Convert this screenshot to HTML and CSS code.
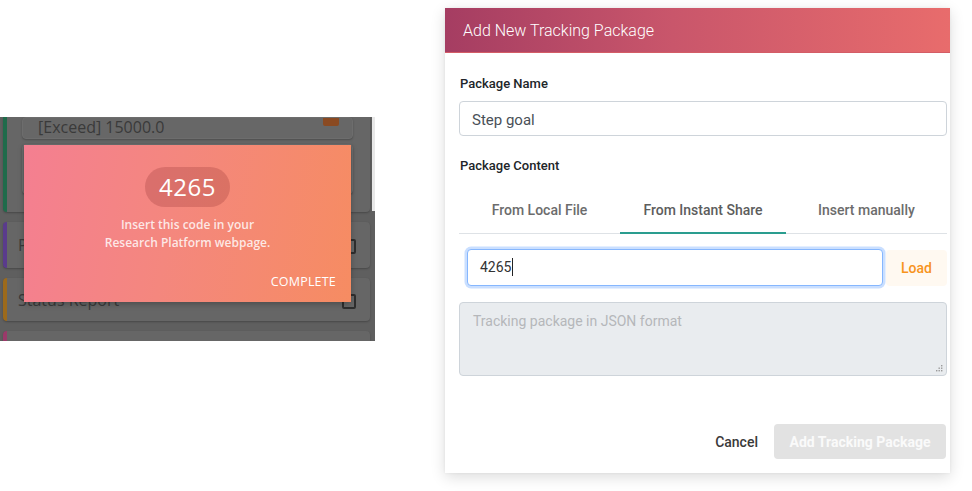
FILE: index.html
```html
<!DOCTYPE html>
<html>
<head>
<meta charset="utf-8">
<link rel="stylesheet" href="styles.css">
</head>
<body>
<div class="page">
  <section class="phone">
    <div class="rows">
      <div class="row row-green">
        <div class="inner inner-top">
          <span class="inner-text">[Exceed] 15000.0</span>
          <span class="check-filled"></span>
        </div>
        <div class="inner inner-second"></div>
      </div>
      <div class="row row-purple">
        <span class="row-text">Pulse</span>
        <span class="check"></span>
      </div>
      <div class="row row-orange">
        <span class="row-text">Status Report</span>
        <span class="check"></span>
      </div>
      <div class="row row-pink"></div>
    </div>
    <div class="scrollbar"></div>
    <div class="popup">
      <div class="code">4265</div>
      <p class="popup-msg">Insert this code in your<br>Research Platform webpage.</p>
      <div class="popup-actions"><span class="complete">COMPLETE</span></div>
    </div>
  </section>

  <section class="modal">
    <header class="modal-header">Add New Tracking Package</header>
    <div class="modal-body">
      <label class="field-label">Package Name</label>
      <div class="text-input">Step goal</div>
      <label class="field-label label-content">Package Content</label>
      <nav class="tabs">
        <span class="tab">From Local File</span>
        <span class="tab active">From Instant Share</span>
        <span class="tab">Insert manually</span>
      </nav>
      <div class="share-row">
        <div class="text-input focused">4265<span class="caret"></span></div>
        <span class="load-btn">Load</span>
      </div>
      <div class="json-area">
        <span class="placeholder">Tracking package in JSON format</span>
        <svg class="grip" width="7" height="7" viewBox="0 0 7 7"><g fill="#9a9a9a"><rect x="5" y="0" width="1.4" height="1.4"/><rect x="2.5" y="2.5" width="1.4" height="1.4"/><rect x="5" y="2.5" width="1.4" height="1.4"/><rect x="0" y="5" width="1.4" height="1.4"/><rect x="2.5" y="5" width="1.4" height="1.4"/><rect x="5" y="5" width="1.4" height="1.4"/></g></svg>
      </div>
      <div class="modal-footer">
        <span class="cancel-btn">Cancel</span>
        <span class="add-btn">Add Tracking Package</span>
      </div>
    </div>
  </section>
</div>
</body>
</html>
```

FILE: styles.css
```css
* { box-sizing: border-box; }
html, body { margin: 0; padding: 0; background: #ffffff; }
body { width: 972px; height: 491px; overflow: hidden; font-family: Roboto, "Liberation Sans", sans-serif; }

.page { display: flex; align-items: flex-start; }

/* ---------- left phone capture ---------- */
.phone {
  position: relative;
  margin-top: 117px;
  width: 375px;
  height: 224px;
  background: #5f5f5f;
  overflow: hidden;
  font-family: "Open Sans", "Noto Sans", sans-serif;
}
.rows { display: flex; flex-direction: column; gap: 10px; padding: 0 3px 0 3px; }
.row {
  position: relative;
  background: #666666;
  border-radius: 4px;
  border-left: 4px solid #333;
  display: flex;
  align-items: center;
  padding-left: 11px;
  margin-right: 2px;
  box-shadow: 0 1px 2px rgba(0,0,0,0.25);
}
.row-green { border-left-color: #1f6b4b; height: 95px; border-top-left-radius: 0; border-top-right-radius: 0; flex-direction: column; align-items: stretch; padding: 0 17px 0 15px; gap: 5px; }
.row-purple { border-left-color: #5a3b8c; height: 46px; }
.row-orange { border-left-color: #9c6a1c; height: 43px; }
.row-pink { border-left-color: #9a3a6a; height: 30px; }

.inner { background: #676767; border-radius: 4px; box-shadow: 0 1px 2px rgba(0,0,0,0.25); border: 1px solid #6d6d6d; }
.inner-top { height: 22px; display: flex; align-items: flex-end; justify-content: space-between; padding: 0 12px 1px 15px; position: relative; }
.inner-text { font-size: 16px; color: #3a3a3a; line-height: 19px; }
.check-filled { position: absolute; right: 13px; top: 0; width: 16px; height: 8px; background: #8a4a22; border-radius: 0 0 2px 2px; }
.inner-second { height: 50px; }
.row-text { font-size: 16px; color: #3a3a3a; }
.check { position: absolute; right: 14px; top: 50%; width: 14px; height: 15px; margin-top: -6px; border: 2px solid #2e2e2e; border-radius: 2px; }
.scrollbar { position: absolute; right: 0; top: 0; width: 3px; height: 94px; background: #e8e8e8; }

.popup {
  position: absolute;
  left: 24px;
  top: 28px;
  width: 327px;
  height: 157px;
  background: linear-gradient(100deg, #f47f91 0%, #f4877e 45%, #f68c62 100%);
  display: flex;
  flex-direction: column;
  align-items: center;
  padding-top: 22px;
  box-shadow: 0 2px 6px rgba(0,0,0,0.25);
}
.code {
  width: 85px;
  height: 40px;
  border-radius: 20px;
  background: rgba(150, 55, 55, 0.28);
  color: #ffffff;
  font-size: 24px;
  line-height: 40px;
  text-align: center;
  letter-spacing: 0.5px;
}
.popup-msg {
  margin: 9px 0 0;
  color: rgba(255,255,255,0.82);
  font-size: 12px;
  font-weight: 600;
  line-height: 18px;
  text-align: center;
}
.popup-actions { align-self: stretch; display: flex; justify-content: flex-end; padding-right: 15px; margin-top: 21px; }
.complete { color: #ffffff; font-size: 12.5px; letter-spacing: 0.2px; }

/* ---------- modal ---------- */
.modal {
  margin-left: 70px;
  margin-top: 8px;
  width: 505px;
  height: 465px;
  background: #ffffff;
  box-shadow: 0 4px 14px rgba(0,0,0,0.14), 0 0 3px rgba(0,0,0,0.06);
  display: flex;
  flex-direction: column;
}
.modal-header {
  height: 45px;
  background: linear-gradient(90deg, #a53d62 0%, #c9566b 45%, #e86c6c 100%);
  color: #ffffff;
  font-size: 16px;
  font-weight: 300;
  line-height: 45px;
  padding-left: 18px;
  border-bottom: 1px solid #d45d66;
}
.modal-body { padding: 23px 3px 14px 14px; display: flex; flex-direction: column; flex: 1; }
.field-label { font-size: 13px; font-weight: 500; color: #212529; line-height: 16px; margin-bottom: 9px; padding-left: 1px; }
.label-content { margin-top: 22px; margin-bottom: 14px; }
.text-input {
  height: 35px;
  border: 1px solid #ced4da;
  border-radius: 4px;
  font-size: 15px;
  color: #495057;
  line-height: 33px;
  padding: 2px 0 0 12px;
  background: #fff;
}
.tabs { display: flex; border-bottom: 1px solid #dee2e6; height: 46px; }
.tab {
  flex: 1;
  text-align: center;
  font-size: 14px;
  font-weight: 500;
  color: #6c6c6c;
  line-height: 44px;
  border-bottom: 2px solid transparent;
  margin-bottom: -1px;
}
.tabs .tab:nth-child(1) { flex: 0 0 161px; }
.tabs .tab:nth-child(2) { flex: 0 0 166px; }
.tab.active { border-bottom: 2px solid #2a9d8f; color: #5d5d5d; }
.share-row { display: flex; align-items: center; margin-top: 15px; padding-left: 8px; gap: 3px; }
.share-row .text-input { flex: 1; height: 37px; line-height: 35px; padding-top: 0; border-color: #86b7fe; box-shadow: 0 0 0 2.5px rgba(13,110,253,0.22); font-size: 14px; padding-left: 12px; color: #333; }
.caret { display: inline-block; width: 1px; height: 18px; background: #222; vertical-align: middle; margin-left: 1px; margin-top: -3px; }
.load-btn {
  width: 61px;
  height: 36px;
  background: #fff9f1;
  border-radius: 4px;
  color: #f7941d;
  font-size: 14px;
  font-weight: 500;
  line-height: 36px;
  text-align: center;
}
.json-area {
  position: relative;
  margin-top: 16px;
  height: 74px;
  background: #e9ecef;
  border: 1px solid #ced4da;
  border-radius: 4px;
  padding: 8px 13px;
}
.placeholder { font-size: 14px; color: #b5b7ba; }
.grip { position: absolute; right: 3px; bottom: 3px; }
.modal-footer { margin-top: auto; display: flex; justify-content: flex-end; align-items: center; gap: 16px; padding-right: 1px; }
.cancel-btn { font-size: 14px; font-weight: 500; color: #3a3a3a; }
.add-btn {
  width: 172px;
  height: 35px;
  line-height: 37px;
  text-align: center;
  background: #e2e2e2;
  border-radius: 4px;
  color: #fafafa;
  font-size: 14px;
  font-weight: 700;
}
```
